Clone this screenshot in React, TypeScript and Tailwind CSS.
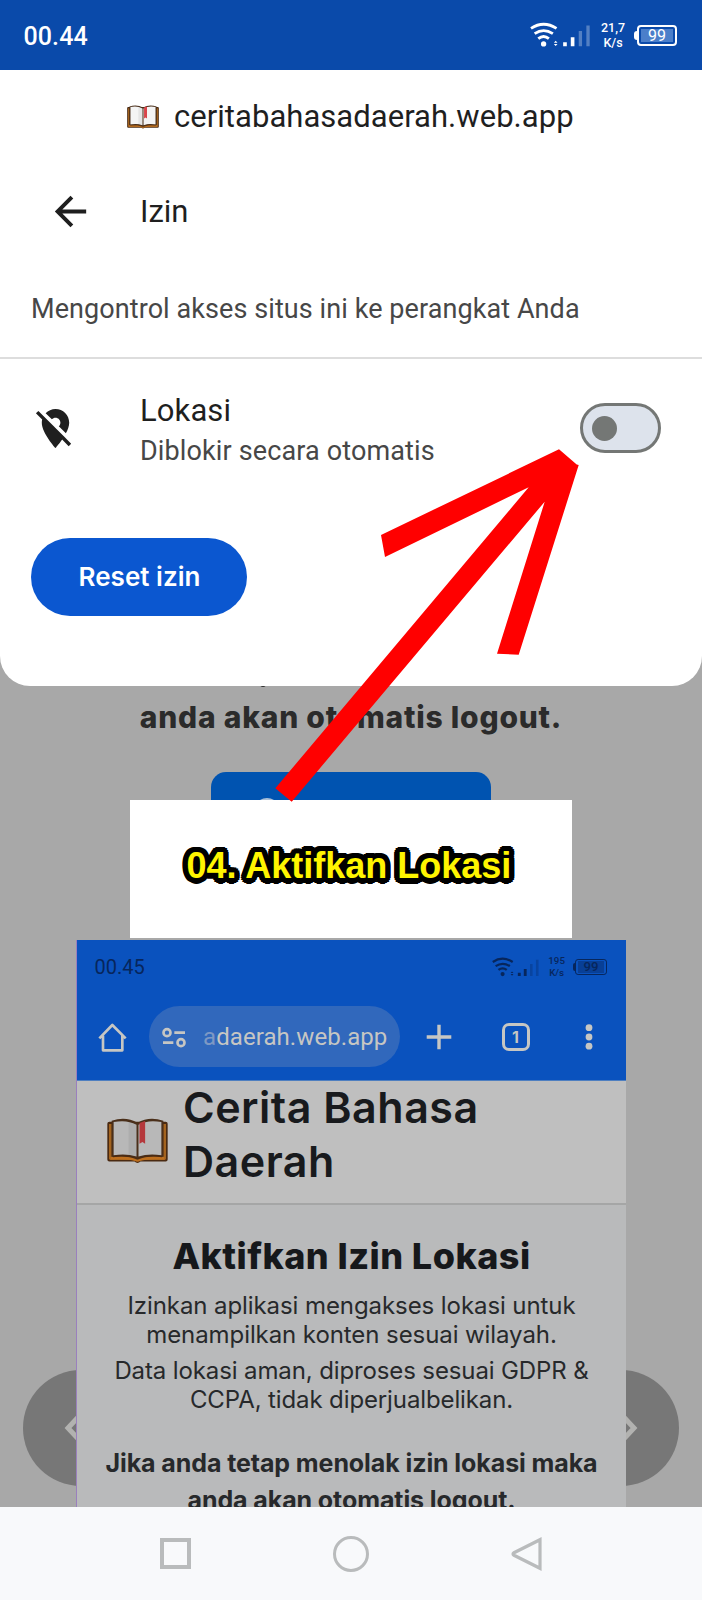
import type { ReactNode } from "react";

function Book({ className }: { className: string }) {
  return (
    <svg className={className} viewBox="140 594 184 138">
      <path d="M147 605h170q6 0 6 6v108q0 6-6 6h-76q-9 9-18 0h-76q-6 0-6-6V611q0-6 6-6z" fill="#4a2a12" />
      <path d="M146 612h8v98h156v-98h8v104q0 4-4 4h-76q-6 6-12 0h-76q-4 0-4-4z" fill="#a4641f" />
      <path d="M154 602q43-14 78 6q35-20 78-6v110q-43-8-78 4q-35-12-78-4z" fill="#4a2f1a" />
      <path d="M160 606q40-8 69 8v96q-30-10-69-4z" fill="var(--page)" />
      <path d="M304 606q-40-8-69 8v96q30-10 69-4z" fill="var(--page)" />
      <path d="M205 602q16 3 24 12v96q-10-5-24-6z" fill="#000" opacity="0.06" />
      <path d="M238 609l17-6v68l-8-5l-9 5z" fill="var(--mark)" />
      <path d="M151 711q50-5 75 7q6 6 12 0q25-12 75-7v8q-50-3-73 4q-8 5-16 0q-23-7-73-4z" fill="#bd6f1f" />
      <path d="M158 710q44-6 74 7q30-13 74-7" fill="none" stroke="#4a2a12" strokeWidth="4" />
    </svg>
  );
}

function StatusIcons({ speed, fill }: { speed: string; fill: ReactNode }) {
  return (
    <div className="flex items-center">
      <svg className="h-[26px] w-[63px]" viewBox="90 35 190 78" fill="none" stroke="currentColor">
        <path d="M93 54q38-25 77 0M104 70q27-18 55 0M115 85q16-13 32 0" strokeWidth="8.5" />
        <circle cx="131" cy="101" r="8" fill="currentColor" stroke="none" />
        <path d="M162 97l5.5-6 5.5 6zM162 101l5.5 6 5.5-6z" fill="currentColor" stroke="none" />
        <path d="M190 96h11v12h-11zM213 81h11v27h-11z" fill="currentColor" stroke="none" />
        <path d="M237 62h10v46h-10zM260 45h10v63h-10z" fill="currentColor" stroke="none" opacity="0.3" />
      </svg>
      <div className="ml-[6px] w-[28px] text-center text-[12.5px] leading-[15px] font-medium">
        <div>{speed}</div>
        <div>K/s</div>
      </div>
      <div className="ml-[7px] h-[9px] w-[3px] rounded-l-sm bg-current" />
      <div className="flex h-[21px] w-[40px] rounded-[4px] border-2 border-current p-[2px]">
        {fill}
      </div>
    </div>
  );
}

function MainStatus() {
  return (
    <header className="flex h-[70px] items-center justify-between bg-[#0a4aaa] pr-[25px] pl-[23.5px] text-white">
      <span className="mt-[3px] text-[25px] font-medium tracking-[0.1px]">00.44</span>
      <StatusIcons
        speed="21,7"
        fill={<div className="flex flex-1 items-center justify-center bg-[#4b7fca] pt-px text-[16px] leading-none">99</div>}
      />
    </header>
  );
}

function PermissionSheet() {
  return (
    <section className="h-[616px] rounded-b-[30px] bg-white text-[#1f1f1f]">
      <div className="flex h-[93px] items-center pl-[127px] text-[31px]">
        <Book className="h-[24px] w-[32px] [--mark:#d9444a] [--page:#f4f4f4]" />
        <span className="mt-[2px] ml-[15px] tracking-[0.04px] whitespace-nowrap">ceritabahasadaerah.web.app</span>
      </div>
      <div className="flex h-[97px] items-center pl-[47px] text-[31px]">
        <svg className="-mt-px size-[47px]" viewBox="0 0 24 24" fill="currentColor">
          <path d="M20 11H7.83l5.59-5.59L12 4l-8 8 8 8 1.41-1.41L7.83 13H20v-2z" />
        </svg>
        <span className="mt-[2px] ml-[46px]">Izin</span>
      </div>
      <p className="flex h-[99px] items-center border-b-2 border-[#dddddd] pt-[2px] pl-[31px] text-[27px] tracking-[0.08px] whitespace-nowrap text-[#474747]">
        Mengontrol akses situs ini ke perangkat Anda
      </p>
      <div className="flex h-[138px] items-center pl-[32px]">
        <svg className="size-[47px]" viewBox="0 0 24 24" fill="currentColor">
          <path d="M12 6.5c1.38 0 2.5 1.12 2.5 2.5 0 .74-.33 1.39-.83 1.85l3.63 3.63c.98-1.86 1.7-3.8 1.7-5.48 0-3.87-3.13-7-7-7-1.98 0-3.76.83-5.04 2.15l3.19 3.19c.46-.52 1.11-.84 1.85-.84zm4.37 9.6l-4.63-4.63-.11-.11L3.27 3 2 4.27l3.18 3.18C5.07 7.95 5 8.47 5 9c0 5.25 7 13 7 13s1.67-1.85 3.38-4.35L18.73 21 20 19.73l-3.63-3.63z" />
        </svg>
        <div className="mt-[6px] ml-[61px] flex-1 leading-[40px] whitespace-nowrap">
          <div className="text-[31px] tracking-[0.1px]">Lokasi</div>
          <div className="text-[27px] tracking-[0.13px] text-[#474747]">Diblokir secara otomatis</div>
        </div>
        <div className="mr-[41px] flex h-[50px] w-[81px] items-center rounded-full border-3 border-[#747775] bg-[#dde3ec] pl-[9px]">
          <div className="size-[25px] rounded-full bg-[#747775]" />
        </div>
      </div>
      <button className="mt-[41px] ml-[31px] block h-[78px] w-[216px] rounded-full bg-[#0b57d0] pb-[2px] pl-[1px] font-['Inter',sans-serif] text-[26px] font-semibold tracking-[0.04px] text-white">
        Reset izin
      </button>
    </section>
  );
}

function InsetPhone() {
  return (
    <section className="ml-[76px] h-[567px] w-[550px] overflow-hidden border-l border-[#9a80bd] bg-[#b9babb]">
      <div className="h-[141px] border-b border-[#4f7fc0] bg-[#0a52be]">
        <div className="flex h-[54px] items-center justify-between pr-[19.5px] pl-[17.5px] text-[#07265c]">
          <span className="text-[20px]">00.45</span>
          <div className="[zoom:0.78]">
            <StatusIcons
              speed="195"
              fill={<div className="flex flex-1 items-center justify-center bg-[#083f96] text-[17px] leading-none font-medium">99</div>}
            />
          </div>
        </div>
        <div className="mt-[12px] flex h-[61px] items-center pl-[20px] text-[#c6c6c3]">
          <svg className="size-[32px]" viewBox="112 300 96 96" fill="none" stroke="currentColor" strokeWidth="8" strokeLinejoin="round">
            <path d="M119 352L158 312L198 352M130 344V388H188V344" />
          </svg>
          <div className="ml-[20px] flex h-[61px] w-[251px] items-center rounded-full bg-[#3168bc] pl-[11px]">
            <svg className="h-[22px] w-[28px]" viewBox="300 315 84 66" fill="none" stroke="currentColor" strokeWidth="8">
              <circle cx="321" cy="335" r="10.5" />
              <path d="M343 335h32M309 365h31" />
              <circle cx="363" cy="365" r="10.5" />
            </svg>
            <span className="ml-[15px] text-[24px] tracking-[0.08px] whitespace-nowrap">
              <span className="text-[#7d98c4]">a</span>daerah.web.app
            </span>
          </div>
          <svg className="ml-[26px] size-[26px]" viewBox="0 0 26 26" stroke="currentColor" strokeWidth="3.4">
            <path d="M13 .7v24.6M.7 13h24.6" />
          </svg>
          <div className="ml-[49.5px] flex size-[28px] items-center justify-center rounded-[7px] border-[3.5px] border-current font-['Inter',sans-serif] text-[16px] leading-none font-bold">
            1
          </div>
          <svg className="ml-[55.5px] h-[26px] w-[8px]" viewBox="0 0 8 26" fill="currentColor">
            <circle cx="4" cy="3.7" r="3.4" />
            <circle cx="4" cy="13" r="3.4" />
            <circle cx="4" cy="22.2" r="3.4" />
          </svg>
        </div>
      </div>
      <div className="flex h-[124px] border-b-2 border-[#a5a6a6] bg-[#bfbfbf] pl-[30px] font-['Inter',sans-serif] text-[#181a1d]">
        <Book className="mt-[37px] h-[46px] w-[61px] [--mark:#b5383c] [--page:#b8b8b8]" />
        <h1 className="ml-[15px] text-[43px] leading-[53.5px] font-semibold tracking-[0.5px] whitespace-nowrap">
          Cerita Bahasa
          <br />
          Daerah
        </h1>
      </div>
      <div className="text-center font-['Inter',sans-serif] whitespace-nowrap text-[#27292b]">
        <h2 className="mt-[21px] text-[36px] leading-[60px] font-extrabold tracking-[0.45px] text-[#16181b]">Aktifkan Izin Lokasi</h2>
        <p className="mt-[5px] text-[24px] leading-[29px] tracking-[-0.08px]">
          Izinkan aplikasi mengakses lokasi untuk
          <br />
          menampilkan konten sesuai wilayah.
        </p>
        <p className="mt-[7px] text-[24px] leading-[29px] tracking-[-0.12px]">
          Data lokasi aman, diproses sesuai GDPR &amp;
          <br />
          CCPA, tidak diperjualbelikan.
        </p>
        <p className="mt-[31px] text-[25px] leading-[36.6px] font-bold tracking-[-0.09px]">
          Jika anda tetap menolak izin lokasi maka
          <br />
          anda akan otomatis logout.
        </p>
      </div>
    </section>
  );
}

export default function App() {
  return (
    <div className="relative h-[1600px] w-[702px] overflow-hidden bg-[#a8a8a8] font-['Roboto',sans-serif]">
      <svg className="absolute top-[1370px] left-[23px] size-[116px]" viewBox="0 0 116 116">
        <circle cx="58" cy="58" r="58" fill="#777777" />
        <path d="M60 42L45 58L60 74" fill="none" stroke="#b2b2b0" strokeWidth="5" />
      </svg>
      <svg className="absolute top-[1370px] left-[563px] size-[116px]" viewBox="0 0 116 116">
        <circle cx="58" cy="58" r="58" fill="#777777" />
        <path d="M56 42L71 58L56 74" fill="none" stroke="#b2b2b0" strokeWidth="5" />
      </svg>
      <div className="absolute top-[684px] left-[260px] h-[3px] w-[6px] rounded-b-full bg-[#2b2b2b]" />

      <div className="relative">
        <MainStatus />
        <PermissionSheet />
        <p className="h-[86px] text-center font-['Inter',sans-serif] text-[30px] leading-[62px] font-extrabold tracking-[0.78px] whitespace-nowrap text-[#2b2b2b]">
          anda akan otomatis logout.
        </p>
        <div className="mx-auto h-[28px] w-[280px] overflow-hidden rounded-t-[15px] bg-[#0053b0]">
          <div className="mt-[26px] ml-[43px] size-[26px] rounded-full bg-[#a9bfd8]" />
        </div>
        <div className="ml-[130px] flex h-[138px] w-[442px] items-center bg-white pb-[7px] pl-[56.5px]">
          <span className="font-['Liberation_Sans',sans-serif] text-[36px] font-bold whitespace-nowrap text-[#fff500] [text-shadow:5.5px_0_#000,5.1px_2.1px_#000,3.9px_3.9px_#000,2.1px_5.1px_#000,0_5.5px_#000,-2.1px_5.1px_#000,-3.9px_3.9px_#000,-5.1px_2.1px_#000,-5.5px_0_#000,-5.1px_-2.1px_#000,-3.9px_-3.9px_#000,-2.1px_-5.1px_#000,0_-5.5px_#000,2.1px_-5.1px_#000,3.9px_-3.9px_#000,5.1px_-2.1px_#000,2px_2px_#000,-2px_2px_#000,2px_-2px_#000,-2px_-2px_#000]">
            04. Aktifkan Lokasi
          </span>
        </div>
        <div className="h-[2px]" />
        <InsetPhone />
        <nav className="flex h-[93px] items-center bg-[#f8f9fb] pl-[160px]">
          <div className="size-[31px] border-4 border-[#b9bbbc]" />
          <div className="ml-[142px] size-[36px] rounded-full border-[3.5px] border-[#b9bbbc]" />
          <svg className="ml-[142px] h-[34px] w-[32px]" viewBox="0 0 32 34" fill="none" stroke="#b9bbbc" strokeWidth="3.2">
            <path d="M29 2.7V31.3L3 18.3Q1 17 3 15.7Z" />
          </svg>
        </nav>
      </div>

      <svg className="absolute top-0 left-0 h-[1000px] w-[702px]" viewBox="0 0 702 1000">
        <path
          d="M559 449.3L576.7 464.5L578.7 465L518.7 654.7L497 653.7L544.7 501.7L291.7 801.7L275.3 788.3L528.7 487.3L385 557L381 535Z"
          fill="#ff0000"
        />
      </svg>
    </div>
  );
}
